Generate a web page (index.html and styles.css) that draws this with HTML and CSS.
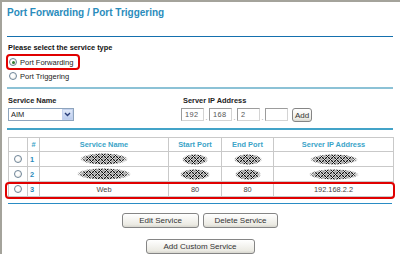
FILE: index.html
```html
<!DOCTYPE html>
<html>
<head>
<meta charset="utf-8">
<link rel="stylesheet" href="styles.css">
</head>
<body>
<div class="frame">
  <h1 class="title">Port Forwarding / Port Triggering</h1>
  <div class="rule rule-top"></div>
  <p class="prompt">Please select the service type</p>
  <div class="options">
    <label class="option"><span class="radio checked"></span>Port Forwarding</label>
    <label class="option"><span class="radio"></span>Port Triggering</label>
    <span class="highlight hl-option"></span>
  </div>
  <div class="rule rule-light"></div>
  <div class="service-row">
    <div class="field field-name">
      <div class="label">Service Name</div>
      <div class="select">
        <span class="select-value">AIM</span>
        <span class="select-btn"><svg width="7" height="5" viewBox="0 0 7 5"><polyline points="1,1 3.5,3.5 6,1" fill="none" stroke="#2a3f7a" stroke-width="1.4"/></svg></span>
      </div>
    </div>
    <div class="field field-ip">
      <div class="label label-ip">Server IP Address</div>
      <div class="ip">
        <span class="ip-box">192</span><span class="dot">.</span>
        <span class="ip-box">168</span><span class="dot">.</span>
        <span class="ip-box">2</span><span class="dot">.</span>
        <span class="ip-box"></span>
        <button class="btn btn-add">Add</button>
      </div>
    </div>
  </div>
  <div class="rule rule-mid"></div>
  <div class="table-wrap">
    <table class="services">
      <colgroup>
        <col class="c-sel"><col class="c-num"><col class="c-name"><col class="c-start"><col class="c-end"><col class="c-ip">
      </colgroup>
      <thead>
        <tr><th></th><th>#</th><th>Service Name</th><th>Start Port</th><th>End Port</th><th>Server IP Address</th></tr>
      </thead>
      <tbody>
        <tr>
          <td class="sel"><span class="radio"></span></td><td class="num">1</td>
          <td><span class="blob b-name1"></span></td><td><span class="blob b-port"></span></td>
          <td><span class="blob b-port2"></span></td><td><span class="blob b-ip"></span></td>
        </tr>
        <tr>
          <td class="sel"><span class="radio"></span></td><td class="num">2</td>
          <td><span class="blob b-name2"></span></td><td><span class="blob b-port3"></span></td>
          <td><span class="blob b-port4"></span></td><td><span class="blob b-ip2"></span></td>
        </tr>
        <tr>
          <td class="sel"><span class="radio"></span></td><td class="num">3</td>
          <td class="val">Web</td><td class="val">80</td><td class="val">80</td><td class="val">192.168.2.2</td>
        </tr>
      </tbody>
    </table>
    <span class="highlight hl-row"></span>
  </div>
  <div class="rule rule-bottom"></div>
  <div class="actions">
    <button class="btn btn-edit">Edit Service</button>
    <button class="btn btn-delete">Delete Service</button>
  </div>
  <div class="actions actions-2">
    <button class="btn btn-custom">Add Custom Service</button>
  </div>
</div>
</body>
</html>
```

FILE: styles.css
```css
* { box-sizing: border-box; }
html, body { margin: 0; padding: 0; background: #fff; }
body { font-family: "Liberation Sans", Arial, sans-serif; color: #000; width: 400px; height: 254px; overflow: hidden; }

.frame {
  height: 254px;
  border-top: 2px solid #a4a39b;
  border-left: 2px solid #a4a39b;
  padding: 0 7px 0 5px;
}

.title {
  margin: 0 0 16px 0;
  padding-top: 4px;
  font-size: 10px;
  line-height: 14px;
  font-weight: bold;
  color: #2a8cbc;
}

.rule { height: 1px; }
.rule-top { background: #1570ae; }
.rule-light { height: 2px; background: #8cc2d6; margin-top: 4px; }
.rule-mid { height: 2px; background: #43a3c8; margin-top: 7px; }
.rule-bottom { background: #2a8cc4; margin-top: 6px; margin-left: 1px; margin-right: 1px; }

.prompt {
  margin: 5px 0 0 1px;
  font-size: 7.4px;
  line-height: 12px;
  font-weight: bold;
  color: #111;
}

.options { position: relative; margin-top: 1px; }
.option {
  display: flex;
  align-items: center;
  height: 14px;
  font-size: 7.5px;
  color: #222;
  padding-left: 2px;
}
.option .radio { margin-right: 3px; }

.radio {
  display: inline-block;
  width: 8px;
  height: 8px;
  border-radius: 50%;
  border: 1px solid #6f8599;
  background: radial-gradient(circle at 40% 40%, #fff 30%, #e4e4dc 100%);
  position: relative;
  flex: none;
}
.radio.checked::after {
  content: "";
  position: absolute;
  left: 1.5px; top: 1.5px;
  width: 3px; height: 3px;
  border-radius: 50%;
  background: #2f7a2f;
}

.highlight {
  position: absolute;
  border: 2px solid #e00000;
  border-radius: 4px;
  pointer-events: none;
}
.hl-option { left: -1px; top: -1px; width: 74px; height: 16px; }

.service-row { display: flex; margin-top: 6px; }
.field-name { width: 174px; padding-left: 1px; }
.label {
  font-size: 7.4px;
  line-height: 12px;
  font-weight: bold;
  color: #222;
}
.label-ip { padding-left: 2px; }

.select {
  margin-top: 1px;
  width: 66px;
  height: 13px;
  border: 1px solid #8ea4bd;
  display: flex;
  align-items: center;
  justify-content: space-between;
  font-size: 7.5px;
  color: #222;
  padding-left: 2px;
}
.select-btn {
  width: 11px;
  height: 11px;
  background: linear-gradient(#dfe8f8, #bccdee);
  border: 1px solid #c4d2ee;
  display: flex;
  align-items: center;
  justify-content: center;
}

.ip { display: flex; align-items: flex-end; margin-top: 1px; height: 13px; }
.ip-box {
  width: 23px;
  height: 13px;
  border: 1px solid #9c9c9c;
  border-right-color: #d4d4d4;
  border-bottom-color: #d4d4d4;
  font-size: 7.4px;
  line-height: 11px;
  color: #555;
  padding-left: 3px;
  letter-spacing: 0.4px;
}
.dot { width: 5px; font-size: 7px; line-height: 7px; color: #888; text-align: center; }

.btn {
  font-family: "Liberation Sans", Arial, sans-serif;
  font-size: 8px;
  color: #333;
  border: 1px solid #858585;
  border-radius: 3px;
  background: linear-gradient(#ffffff, #ecebe4 80%, #d8d7cf);
  padding: 0;
  height: 15px;
  line-height: 13px;
}
.btn-add { width: 20px; height: 14px; margin-left: 4px; font-size: 8px; align-self: flex-start; margin-top: 0; }

.table-wrap { position: relative; margin-top: 7px; padding: 0 1px; }
.services {
  width: 385px;
  border-collapse: collapse;
  table-layout: fixed;
  font-size: 7.4px;
}
.c-sel { width: 19px; }
.c-num { width: 12px; }
.c-name { width: 129px; }
.c-start { width: 53px; }
.c-end { width: 52px; }
.c-ip { width: 120px; }
.services th, .services td {
  border: 1px solid #c9c9c9;
  padding: 0;
  text-align: center;
  vertical-align: middle;
}
.services th {
  height: 14px;
  font-weight: bold;
  color: #3ba4c8;
}
.services td { height: 15px; color: #444; }
.services td.val { color: #444; }
.services td.num { font-weight: bold; color: #2a8cbc; text-align: left; padding-left: 2px; }
.services td.sel .radio { display: block; margin: 0 auto; }

.blob {
  display: inline-block;
  height: 11px;
  vertical-align: middle;
  border-radius: 40% 50% 45% 50%;
  background:
    repeating-conic-gradient(rgba(255,255,255,0.7) 0 12%, transparent 0 30%) 1px 0 / 3px 3px,
    repeating-conic-gradient(#111 0 25%, #9a9a9a 0 50%) 0 0 / 2px 2px;
  filter: blur(0.3px);
  -webkit-mask-image: radial-gradient(ellipse at center, #000 55%, transparent 72%);
  mask-image: radial-gradient(ellipse at center, #000 55%, transparent 72%);
}
.b-name1 { width: 48px; height: 12px; }
.b-name2 { width: 54px; height: 12px; }
.b-port { width: 26px; }
.b-port2 { width: 28px; }
.b-port3 { width: 30px; }
.b-port4 { width: 26px; }
.b-ip { width: 48px; }
.b-ip2 { width: 50px; }

.hl-row { left: -2px; top: 45px; width: 390px; height: 17px; }

.actions { display: flex; justify-content: center; gap: 4px; margin-top: 9px; }
.actions-2 { margin-top: 11px; }
.btn-edit { width: 77px; }
.btn-delete { width: 75px; }
.btn-custom { width: 109px; }
```
